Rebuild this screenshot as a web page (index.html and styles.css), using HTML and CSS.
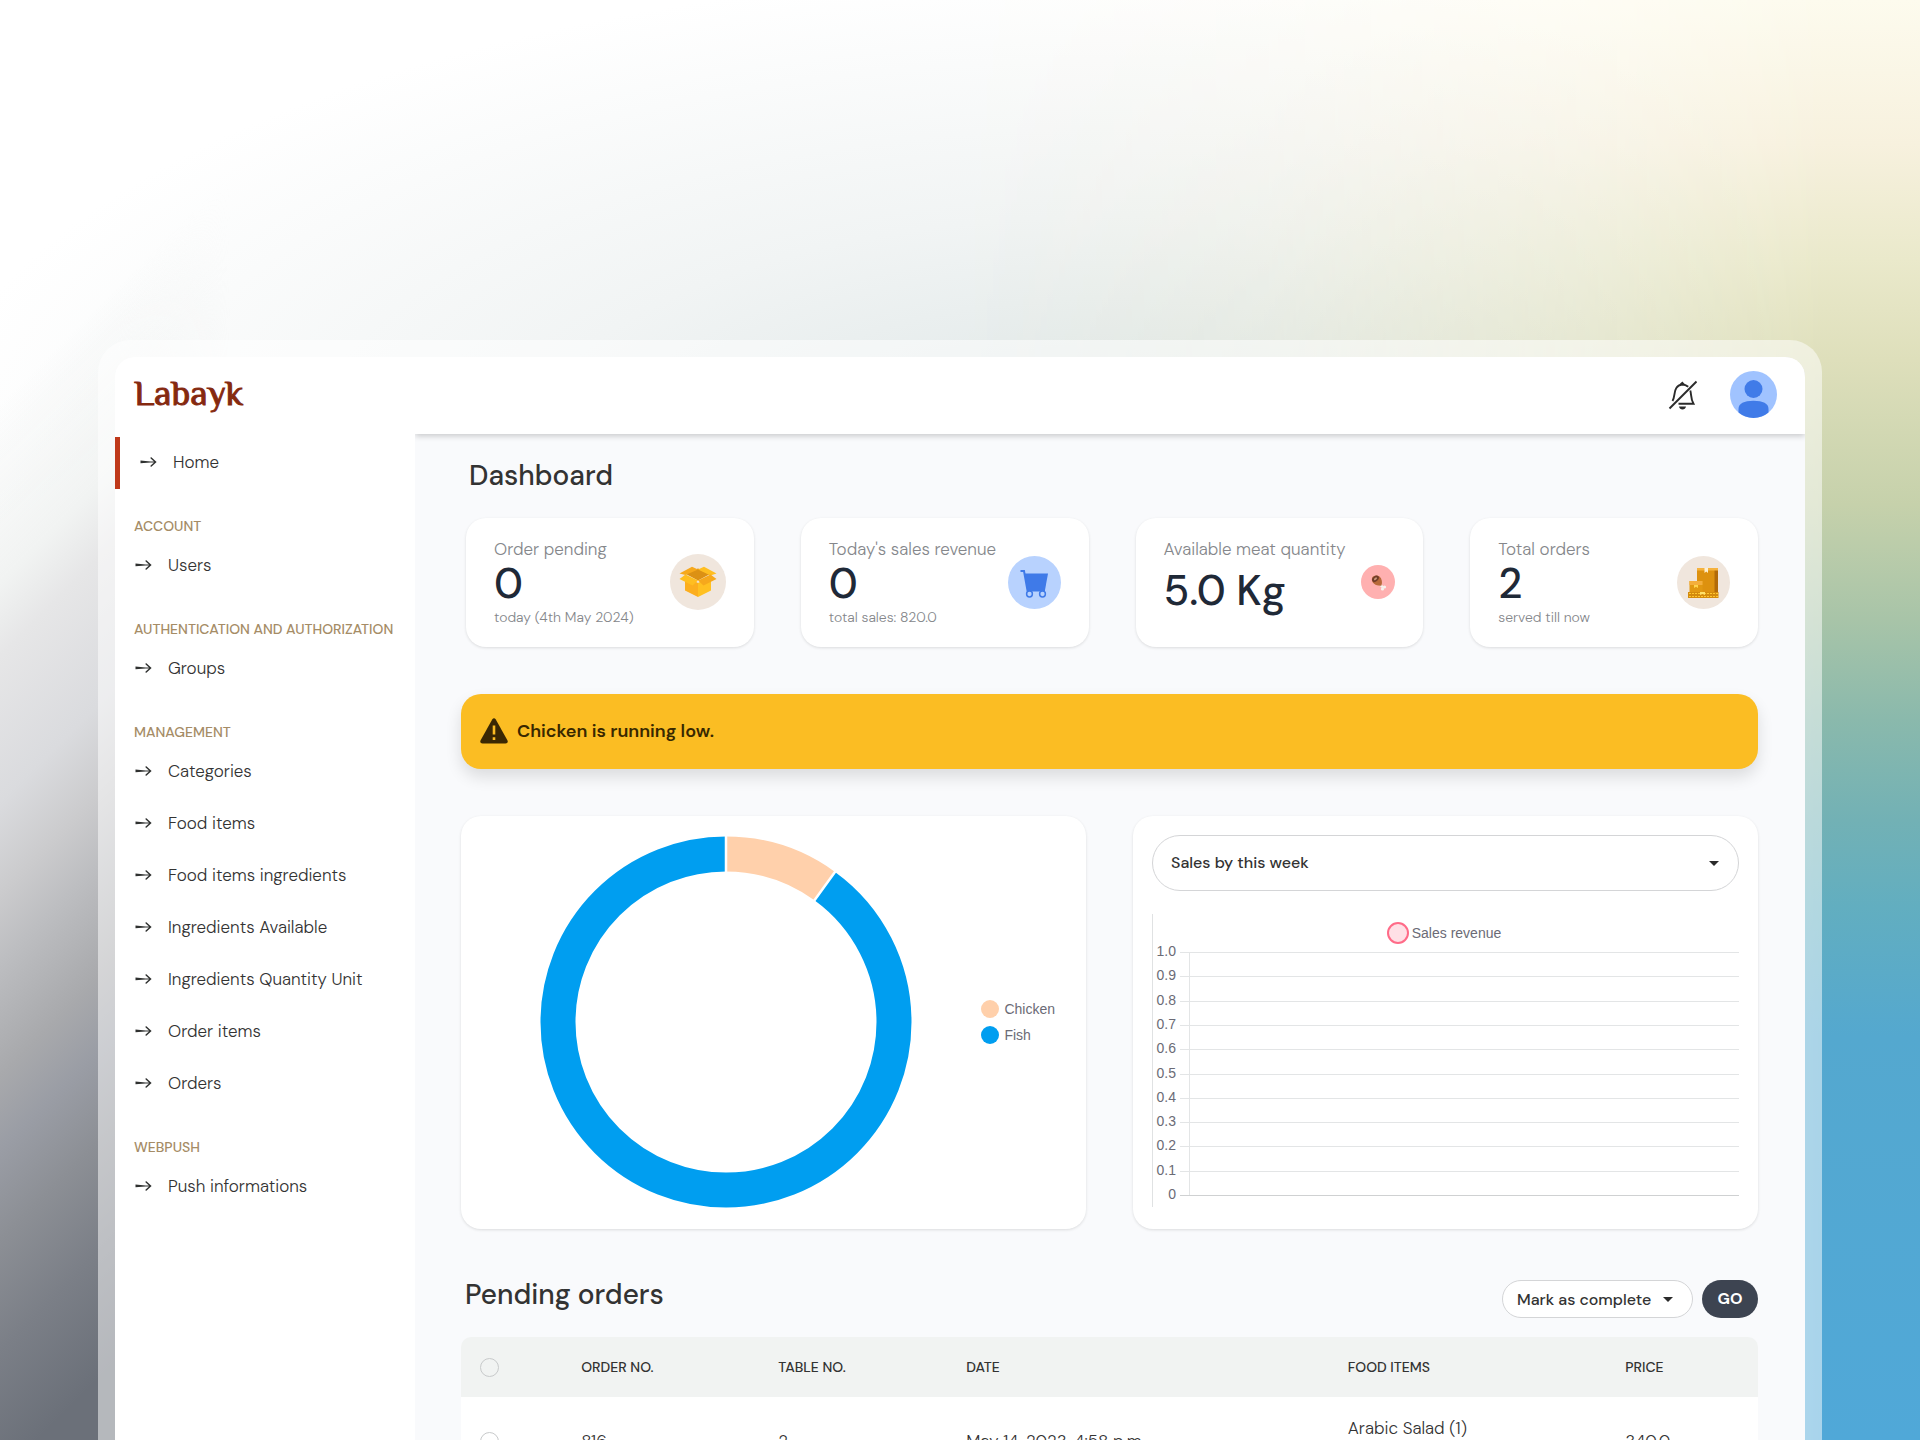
FILE: index.html
```html
<!DOCTYPE html>
<html lang="en">
<head>
    <meta charset="UTF-8">
    <meta name="viewport" content="width=device-width, initial-scale=1.0">
    <title>Labayk | Dashboard</title>
    <link rel="stylesheet" href="styles.css">
</head>
<body>
    <svg class="defs" aria-hidden="true">
        <symbol id="arrow" viewBox="0 0 18 14">
            <path d="M.5 5.500L10.500 6.500H14L10.600 3.600Q9.800 2.200 11.400 2.200L16.600 7L11.400 11.800Q9.800 11.800 10.600 10.400L14 7.500H10.500L.5 8.200Z" fill="#2f3130"/>
        </symbol>
    </svg>

    <div class="frame">
        <div class="window">
            <aside class="sidebar">
                <a href="#" class="logo">Labayk</a>
                <nav>
                    <a href="#" class="nav-item active"><svg class="arrow"><use href="#arrow"/></svg>Home</a>
                    <h3>Account</h3>
                    <a href="#" class="nav-item"><svg class="arrow"><use href="#arrow"/></svg>Users</a>
                    <h3>Authentication and Authorization</h3>
                    <a href="#" class="nav-item"><svg class="arrow"><use href="#arrow"/></svg>Groups</a>
                    <h3>Management</h3>
                    <a href="#" class="nav-item"><svg class="arrow"><use href="#arrow"/></svg>Categories</a>
                    <a href="#" class="nav-item"><svg class="arrow"><use href="#arrow"/></svg>Food items</a>
                    <a href="#" class="nav-item"><svg class="arrow"><use href="#arrow"/></svg>Food items ingredients</a>
                    <a href="#" class="nav-item"><svg class="arrow"><use href="#arrow"/></svg>Ingredients Available</a>
                    <a href="#" class="nav-item"><svg class="arrow"><use href="#arrow"/></svg>Ingredients Quantity Unit</a>
                    <a href="#" class="nav-item"><svg class="arrow"><use href="#arrow"/></svg>Order items</a>
                    <a href="#" class="nav-item"><svg class="arrow"><use href="#arrow"/></svg>Orders</a>
                    <h3>Webpush</h3>
                    <a href="#" class="nav-item"><svg class="arrow"><use href="#arrow"/></svg>Push informations</a>
                </nav>
            </aside>

            <div class="main">
                <header class="topbar">
                    <button class="icon-btn" aria-label="Notifications">
                        <svg width="30" height="30" viewBox="0 0 30 30" fill="none" stroke="#2b2b2b" stroke-width="1.9">
                            <path d="M4.500 21C7 17 6 11.500 8.300 8C9.500 6 11.500 4.800 14 4.500C16.500 4.500 18.700 5.400 20.200 6.800"/>
                            <path d="M22.300 10.500C23.500 14.500 22.500 18.500 25.500 23.800H10.500"/>
                            <path d="M1.500 28.500L28.500 1.500"/>
                            <path d="M11.500 4.200L14.300 1.500L17 4.200Z" fill="#2b2b2b" stroke="none"/>
                            <path d="M11 26.500H18C17.500 30.500 11.500 30.500 11 26.500Z" fill="#2b2b2b" stroke="none"/>
                        </svg>
                    </button>
                    <button class="icon-btn" aria-label="Profile">
                        <svg width="47" height="47" viewBox="0 0 47 47">
                            <circle cx="23.500" cy="23.500" r="23.500" fill="#a0c3ff"/>
                            <circle cx="23.500" cy="18" r="9" fill="#407be8"/>
                            <path d="M8.500 41.500V38C8.500 32.500 14 29.800 23.500 29.800S38.500 32.500 38.500 38V41.500A23.500 23.500 0 0 1 8.500 41.500Z" fill="#407be8"/>
                        </svg>
                    </button>
                </header>

                <main class="content">
                    <h1>Dashboard</h1>

                    <section class="stats">
                        <div class="card stat">
                            <div>
                                <p class="stat-title">Order pending</p>
                                <p class="stat-value">0</p>
                                <p class="stat-desc">today (4th May 2024)</p>
                            </div>
                            <svg width="56" height="56" viewBox="0 0 56 56">
                                <circle cx="28" cy="28" r="28" fill="#f0e6dd"/>
                                <path d="M15 22L28 29V43L15 36.500Z" fill="#fcae1e"/>
                                <path d="M41 22L28 29V43L41 36.500Z" fill="#ffc021"/>
                                <path d="M15 19.500L28 14.500L41 19.500L28 26.500Z" fill="#dc9114"/>
                                <path d="M9.500 19.500L22 12.800L28 15.500L15.500 21Z" fill="#f6a81c"/>
                                <path d="M28 15.500L34 12.800L46.500 19.500L40.500 21.500Z" fill="#ffbe20"/>
                                <path d="M15.500 20.500L28 26.500L22.500 31.500L9.500 25Z" fill="#ffbe20"/>
                                <path d="M40.500 20.500L28 26.500L33.500 31.500L46.500 25Z" fill="#f6a81c"/>
                            </svg>
                        </div>
                        <div class="card stat">
                            <div>
                                <p class="stat-title">Today's sales revenue</p>
                                <p class="stat-value">0</p>
                                <p class="stat-desc">total sales: 820.0</p>
                            </div>
                            <svg width="53" height="53" viewBox="0 0 53 53">
                                <circle cx="26.500" cy="26.500" r="26.500" fill="#b8d2fe"/>
                                <path d="M12.500 15H16L19.500 34.500H37" fill="none" stroke="#3f7ae8" stroke-width="2"/>
                                <path d="M16.500 17.500H40L37 34H19.500Z" fill="#3f7ae8"/>
                                <circle cx="21.500" cy="38" r="2.900" fill="#b8d2fe" stroke="#3f7ae8" stroke-width="1.500"/>
                                <circle cx="34.500" cy="38" r="2.900" fill="#b8d2fe" stroke="#3f7ae8" stroke-width="1.500"/>
                            </svg>
                        </div>
                        <div class="card stat">
                            <div>
                                <p class="stat-title">Available meat quantity</p>
                                <p class="stat-value stat-value-only">5.0 Kg</p>
                            </div>
                            <svg width="34" height="34" viewBox="0 0 34 34">
                                <circle cx="17" cy="17" r="17" fill="#ffb0b0"/>
                                <path d="M18.500 19L22 22.500" stroke="#f7f3ee" stroke-width="2.400"/>
                                <circle cx="23.500" cy="22" r="1.600" fill="#f7f3ee"/>
                                <circle cx="21.500" cy="24" r="1.600" fill="#f7f3ee"/>
                                <path d="M11 13C11.500 10.500 16 9.500 18.500 11.500C21 13.500 21.500 17.500 20.500 20.500C17.500 21.500 9.500 19 11 13Z" fill="#b8693a"/>
                                <ellipse cx="14.500" cy="13.800" rx="3.800" ry="2.600" transform="rotate(-40 14.500 13.800)" fill="#713c2a"/>
                                <ellipse cx="14.500" cy="13.800" rx="1.800" ry="1" transform="rotate(-40 14.500 13.800)" fill="#c99779"/>
                            </svg>
                        </div>
                        <div class="card stat">
                            <div>
                                <p class="stat-title">Total orders</p>
                                <p class="stat-value">2</p>
                                <p class="stat-desc">served till now</p>
                            </div>
                            <svg width="53" height="53" viewBox="0 0 53 53">
                                <circle cx="26.500" cy="26.500" r="26.500" fill="#f0e6dd"/>
                                <path d="M20 12H40V36H20Z" fill="#dd910f"/>
                                <path d="M37.500 12H41V36H37.500Z" fill="#b26a08"/>
                                <path d="M20 12H41V14.500H20Z" fill="#f5b23e"/>
                                <path d="M27.500 12H31V17L29.200 15.500L27.500 17Z" fill="#fff0d0"/>
                                <path d="M12.500 25H25.500V36H12.500Z" fill="#e19812"/>
                                <path d="M12.500 25H25.500V29H12.500Z" fill="#f4ae3c"/>
                                <path d="M17 29H21V32L19 30.800L17 32Z" fill="#ffd44d"/>
                                <path d="M11 36H41.500V42H11Z" fill="#d38a0d"/>
                                <path d="M12 37.500H41M12 40.500H41" stroke="#ffc62e" stroke-width="1.200" stroke-dasharray="2 1"/>
                                <path d="M23 36H28V39L25.500 38L23 39Z" fill="#ffe06a"/>
                            </svg>
                        </div>
                    </section>

                    <div class="alert" role="alert">
                        <svg width="28" height="26" viewBox="0 0 28 26">
                            <path d="M12.200 1.500Q14 -1 15.800 1.500L27.500 22.500Q28.500 25.500 25.500 25.500H2.500Q-.5 25.500 .5 22.500Z" fill="#3a2803"/>
                            <path d="M14 7.500V16.500M14 19.200V22" stroke="#fbbd23" stroke-width="2.600"/>
                        </svg>
                        <span>Chicken is running low.</span>
                    </div>

                    <section class="charts">
                        <div class="card stock">
                            <div class="donut">
                                <svg width="372" height="372" viewBox="0 0 372 372">
                                    <!-- stroke length per slice: chicken 10%, fish 90% -->
                                    <g fill="none" stroke-width="35" transform="rotate(-90 186 186)">
                                        <circle cx="186" cy="186" r="168" stroke="#009ef0" pathLength="100" stroke-dasharray="90 10" stroke-dashoffset="-10"/>
                                        <circle cx="186" cy="186" r="168" stroke="#ffd0ab" pathLength="100" stroke-dasharray="10 90"/>
                                    </g>
                                    <path d="M186 0V37M295.300 35.500L273.600 65.500" stroke="#fff" stroke-width="2.500"/>
                                </svg>
                            </div>
                            <ul class="legend">
                                <li><i class="dot chicken"></i>Chicken</li>
                                <li><i class="dot fish"></i>Fish</li>
                            </ul>
                        </div>

                        <div class="card sales">
                            <div class="select-wrap">
                                <select class="select" aria-label="Sales period">
                                    <option>Sales by this week</option>
                                    <option>Sales by this month</option>
                                </select>
                            </div>
                            <div class="plot">
                                <div class="plot-legend"><i class="ring"></i>Sales revenue</div>
                                <svg class="grid" id="grid"></svg>
                            </div>
                        </div>
                    </section>

                    <div class="toolbar">
                        <h2>Pending orders</h2>
                        <form class="actions">
                            <div class="select-wrap">
                                <select class="select select-sm" aria-label="Action">
                                    <option>Mark as complete</option>
                                </select>
                            </div>
                            <button type="button" class="go">GO</button>
                        </form>
                    </div>

                    <table class="orders">
                        <colgroup>
                            <col class="col-check"><col class="col-no"><col class="col-table"><col class="col-date"><col class="col-food"><col class="col-price">
                        </colgroup>
                        <thead>
                            <tr>
                                <th><input type="checkbox" aria-label="Select all orders"></th>
                                <th>Order No.</th>
                                <th>Table No.</th>
                                <th>Date</th>
                                <th>Food Items</th>
                                <th>Price</th>
                            </tr>
                        </thead>
                        <tbody>
                            <tr>
                                <td><input type="checkbox" aria-label="Select order 816"></td>
                                <td>816</td>
                                <td>2</td>
                                <td>May 14, 2023, 4:58 p.m.</td>
                                <td class="food">Arabic Salad (1)</td>
                                <td>340.0</td>
                            </tr>
                        </tbody>
                    </table>
                </main>
            </div>
        </div>
    </div>

    <script>
        var grid = document.getElementById("grid");
        var lines = '<line x1="36" x2="36" y1="0" y2="243" stroke="#e3e5e6"/>';

        for (let i = 0; i <= 10; i++) {
            const y = Math.round(i * 24.3);
            const label = i == 10 ? "0" : ((10 - i) / 10).toFixed(1);
            lines += '<line x1="27" x2="100%" y1="' + y + '" y2="' + y + '" stroke="' + (i == 10 ? "#cfd1d2" : "#e3e5e6") + '"/>';
            lines += '<text x="23" y="' + (y + 4) + '" text-anchor="end">' + label + '</text>';
        }
        grid.innerHTML = lines;
    </script>
</body>
</html>
```
FILE: styles.css
```css
* {
    box-sizing: border-box;
}
body {
    position: relative;
    margin: 0;
    height: 100vh;
    overflow: hidden;
    font-family: "DM Sans", Inter, sans-serif;
    font-size: 17px;
    font-weight: 300;
    color: #333;
    background: radial-gradient(ellipse 62% 34% at 58% 32%, #dce5e5, #f1f4f4 50%, transparent), #fff;
}
/* grey side and colour side of the backdrop */
body::before, body::after {
    content: "";
    position: absolute;
    inset: 0;
    z-index: -1;
}
body::before {
    right: 80%;
    background: linear-gradient(135deg, transparent 22%, #f1f3f2 32%, #e6e6e7 36%, #dadbde 44%, #cbcbcd 49%, #bcbdc0 53%, #a8a9ac 59%, #9a9da5 63%, #8c8f95 68%, #7b7f87 74%, #6b7079 81%);
    -webkit-mask-image: linear-gradient(to right, #000 30%, transparent 60%);
    mask-image: linear-gradient(to right, #000 30%, transparent 60%);
}
body::after {
    background: linear-gradient(#fdfbee 0%, #f7f1de 10%, #eae9cb 18%, #dedfbb 25%, #c6d1ab 35%, #a8c4a8 43%, #8ab9ac 50%, #72b1b5 57%, #62aec0 63%, #54a8cf 72%, #50a8d8 100%);
    -webkit-mask-image: linear-gradient(to left, #000 5%, rgba(0, 0, 0, 0.6) 18%, rgba(0, 0, 0, 0.2) 34%, transparent 50%);
    mask-image: linear-gradient(to left, #000 5%, rgba(0, 0, 0, 0.6) 18%, rgba(0, 0, 0, 0.2) 34%, transparent 50%);
}
h1, h2, h3, p, ul {
    margin: 0;
    padding: 0;
}
a {
    color: inherit;
    text-decoration: none;
}
.defs {
    position: absolute;
    width: 0;
    height: 0;
}
.frame {
    height: calc(100vh - 340px);
    margin: 340px 98px 0;
    padding: 17px 17px 0;
    border-radius: 32px 32px 0 0;
    background: rgba(255, 255, 255, 0.5);
}
.window {
    display: flex;
    height: 100%;
    overflow: hidden;
    border-radius: 20px 20px 0 0;
    background: #f9fafc;
}

/* sidebar */
.sidebar {
    position: relative;
    z-index: 1;
    flex: none;
    width: 300px;
    background: #fff;
}
.logo {
    display: block;
    height: 80px;
    padding: 14px 19px;
    font: 400 36px/44px "Philosopher", "Liberation Serif", serif;
    -webkit-text-stroke: 1px #85290f;
    color: #85290f;
}
.sidebar h3 {
    height: 51px;
    padding: 25px 19px 0;
    font-size: 14px;
    line-height: 24px;
    font-weight: 500;
    color: #a58c66;
    text-transform: uppercase;
    white-space: nowrap;
}
.nav-item {
    display: flex;
    align-items: center;
    gap: 15px;
    height: 52px;
    padding: 0 0 2px 20px;
}
.nav-item.active {
    border-left: 5px solid #bf391a;
}
.arrow {
    width: 18px;
    height: 14px;
}

/* header */
.main {
    flex: 1;
    min-width: 0;
}
.topbar {
    display: flex;
    align-items: center;
    justify-content: flex-end;
    gap: 32px;
    height: 77px;
    padding: 0 28px 2px 0;
    background: #fff;
    box-shadow: 0 2px 6px rgba(0, 0, 0, 0.2);
}
.icon-btn {
    display: flex;
    padding: 0;
    border: 0;
    background: none;
}

.content {
    padding: 24px 47px 0 46px;
}
h1, h2 {
    font-size: 28px;
    font-weight: 500;
}
h1 {
    padding-left: 8px;
    line-height: 36px;
}
.card {
    border-radius: 20px;
    background: #fff;
    box-shadow: 0 1px 3px rgba(0, 0, 0, 0.12);
}

/* stats */
.stats {
    display: grid;
    grid-template-columns: repeat(4, 1fr);
    gap: 47px;
    margin: 24px 0 47px 5px;
}
.stat {
    display: flex;
    align-items: center;
    justify-content: space-between;
    padding: 19px 28px 20px;
    white-space: nowrap;
}
.stat > div {
    align-self: flex-start;
}
.stat svg {
    flex: none;
}
.stat-title {
    line-height: 24px;
    color: #85878b;
}
.stat-value {
    font-size: 42px;
    line-height: 46px;
    font-weight: 500;
    color: #1f2937;
}
.stat-value-only {
    line-height: 60px;
}
.stat-desc {
    font-size: 14px;
    line-height: 20px;
    color: #85878b;
}

.alert {
    display: flex;
    align-items: center;
    gap: 9px;
    height: 75px;
    padding: 0 19px 2px;
    border-radius: 20px;
    font-size: 18px;
    font-weight: 600;
    color: #382800;
    background: #fbbd23;
    box-shadow: 0 8px 16px rgba(0, 0, 0, 0.12);
}

/* charts */
.charts {
    display: grid;
    grid-template-columns: 1fr 1fr;
    gap: 47px;
    margin: 47px 0 51px;
    font-family: "Liberation Sans", Arial, sans-serif;
    font-size: 14px;
    font-weight: 400;
    color: #6b6b76;
}
.stock {
    display: flex;
    align-items: center;
    gap: 9px;
    padding: 20px 31px 21px 19px;
}
.donut {
    display: flex;
    flex: 1;
    justify-content: center;
}
.legend {
    list-style: none;
}
.legend li {
    display: flex;
    align-items: center;
    gap: 5px;
    line-height: 26px;
}
.dot {
    width: 18px;
    height: 18px;
    border-radius: 50%;
}
.chicken {
    background: #ffd0ab;
}
.fish {
    background: #009ef0;
}
.sales {
    padding: 19px 19px 22px;
}
.select-wrap {
    position: relative;
}
.select-wrap::after {
    content: "";
    position: absolute;
    top: 50%;
    right: 20px;
    margin-top: -2px;
    border: 5px solid transparent;
    border-top-color: #2b2b2b;
    border-bottom: 0;
    pointer-events: none;
}
.select {
    display: block;
    width: 100%;
    height: 56px;
    padding: 0 18px 2px;
    border: 1px solid #d4d5d7;
    border-radius: 28px;
    font-family: "DM Sans", Inter, sans-serif;
    font-size: 16px;
    font-weight: 500;
    color: #333;
    background: #fff;
    appearance: none;
}
.plot {
    margin-top: 23px;
    border-left: 1px solid #e0e2e3;
}
.plot-legend {
    display: flex;
    align-items: center;
    justify-content: center;
    gap: 3px;
    height: 38px;
    padding-right: 4px;
}
.ring {
    width: 22px;
    height: 22px;
    border: 2px solid #ff6b88;
    border-radius: 50%;
    background: #ffe0e6;
}
.grid {
    display: block;
    width: 100%;
    height: 255px;
    overflow: visible;
    fill: #6b6b76;
    shape-rendering: crispEdges;
}

/* pending orders */
.toolbar {
    display: flex;
    justify-content: space-between;
}
h2 {
    padding-left: 4px;
    line-height: 30px;
}
.actions {
    display: flex;
    gap: 9px;
}
.select-sm {
    height: 38px;
    width: 191px;
    padding: 0 14px;
}
.go {
    width: 56px;
    height: 38px;
    padding: 0 0 2px;
    border: 0;
    border-radius: 19px;
    font-family: inherit;
    font-size: 16px;
    font-weight: 700;
    color: #fff;
    background: #3d4451;
}
.orders {
    width: 100%;
    margin-top: 19px;
    border-collapse: collapse;
    table-layout: fixed;
    white-space: nowrap;
}
.col-check { width: 7.8%; }
.col-no { width: 15.2%; }
.col-table { width: 14.5%; }
.col-date { width: 29.4%; }
.col-food { width: 21.4%; }
.col-price { width: 11.7%; }
.orders th, .orders td {
    padding: 0 0 0 19px;
    text-align: left;
}
.orders th {
    height: 60px;
    font-size: 14px;
    font-weight: 500;
    text-transform: uppercase;
    background: #f1f3f2;
}
.orders th:first-child {
    border-top-left-radius: 10px;
}
.orders th:last-child {
    border-top-right-radius: 10px;
}
.orders td {
    height: 88px;
    background: #fff;
}
.orders .food {
    padding-top: 20px;
    vertical-align: top;
}
.orders input {
    display: block;
    width: 19px;
    height: 19px;
    margin: 0;
    border: 1px solid #c8cacb;
    border-radius: 50%;
    appearance: none;
}
```
